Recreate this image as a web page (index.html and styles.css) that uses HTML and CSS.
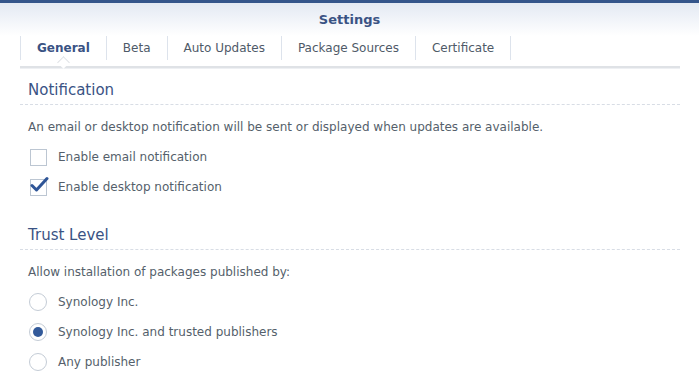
FILE: index.html
```html
<!DOCTYPE html>
<html lang="en">
<head>
  <meta charset="UTF-8" />
  <title>Settings</title>
  <link rel="stylesheet" href="styles.css">
</head>
<body>
  <div class="window">
    <header class="title-bar">
      <h1>Settings</h1>
    </header>

    <nav class="tabs">
      <span class="tab active">General</span>
      <span class="tab">Beta</span>
      <span class="tab">Auto Updates</span>
      <span class="tab">Package Sources</span>
      <span class="tab">Certificate</span>
    </nav>

    <section class="section">
      <h2>Notification</h2>
      <p class="desc">An email or desktop notification will be sent or displayed when updates are available.</p>
      <label class="option">
        <span class="check"></span>
        Enable email notification
      </label>
      <label class="option">
        <span class="check checked">
          <svg width="20" height="18" viewBox="0 0 20 18"><path d="M3 9.5 L7.5 14 L18 2.5" fill="none" stroke="#2f5597" stroke-width="3" stroke-linecap="round" stroke-linejoin="round"/></svg>
        </span>
        Enable desktop notification
      </label>
    </section>

    <section class="section">
      <h2>Trust Level</h2>
      <p class="desc">Allow installation of packages published by:</p>
      <label class="option">
        <span class="radio"></span>
        Synology Inc.
      </label>
      <label class="option">
        <span class="radio selected"></span>
        Synology Inc. and trusted publishers
      </label>
      <label class="option">
        <span class="radio"></span>
        Any publisher
      </label>
    </section>
  </div>
</body>
</html>
```

FILE: styles.css
```css
:root {
  --title-color: #3a5384;
  --text-color: #555f6b;
  --border: #c8d0dc;
  --dash: #d8dde5;
}
body {
  margin: 0;
  font-family: "DejaVu Sans", Verdana, sans-serif;
  font-size: 12px;
  color: var(--text-color);
  background: #fff;
}
.window {
  border-top: 3px solid #34558b;
}
.title-bar {
  height: 33px;
  background: linear-gradient(#e3e9f3, #ffffff);
  display: flex;
  align-items: center;
  justify-content: center;
}
h1 {
  margin: 0;
  font-size: 13px;
  font-weight: bold;
  color: var(--title-color);
}
.tabs {
  margin: 0 19px 0 20px;
  display: flex;
  height: 30px;
  align-items: flex-start;
  border-bottom: 2px solid #dfe2e6;
  box-shadow: 0 1px 0 #eef0f3;
}
.tab {
  position: relative;
  padding: 0 16px;
  height: 24px;
  line-height: 24px;
  border-left: 1px solid #dde3ec;
  color: #4f5a68;
}
.tab:last-child {
  border-right: 1px solid #dde3ec;
}
.tab.active {
  font-weight: bold;
  color: var(--title-color);
}
.tab.active::after {
  content: "";
  position: absolute;
  left: 38px;
  bottom: -7px;
  width: 8px;
  height: 8px;
  background: #fff;
  border-left: 1px solid #dfe2e6;
  border-top: 1px solid #dfe2e6;
  transform: rotate(45deg);
}
.section {
  margin: 0 19px 0 20px;
}
.section h2 {
  margin: 0;
  padding: 13px 0 0 8px;
  height: 23px;
  font-size: 15px;
  font-weight: normal;
  color: var(--title-color);
  border-bottom: 1px dashed var(--dash);
}
.section + .section h2 {
  padding-top: 24px;
}
.desc {
  margin: 0;
  padding: 15px 0 0 8px;
  height: 22px;
}
.option {
  display: flex;
  align-items: center;
  gap: 11px;
  height: 30px;
  padding-left: 10px;
}
.check {
  width: 15px;
  height: 15px;
  border: 1px solid #bcc6d2;
  background: #fff;
  position: relative;
}
.check svg {
  position: absolute;
  left: -2px;
  top: -4px;
}
.radio {
  width: 16px;
  height: 16px;
  margin-left: -1px;
  border: 1px solid #c4ccd6;
  border-radius: 50%;
  background: #fff;
  display: flex;
  align-items: center;
  justify-content: center;
}
.radio.selected::before {
  content: "";
  width: 10px;
  height: 10px;
  border-radius: 50%;
  background: #335a9a;
}
```
